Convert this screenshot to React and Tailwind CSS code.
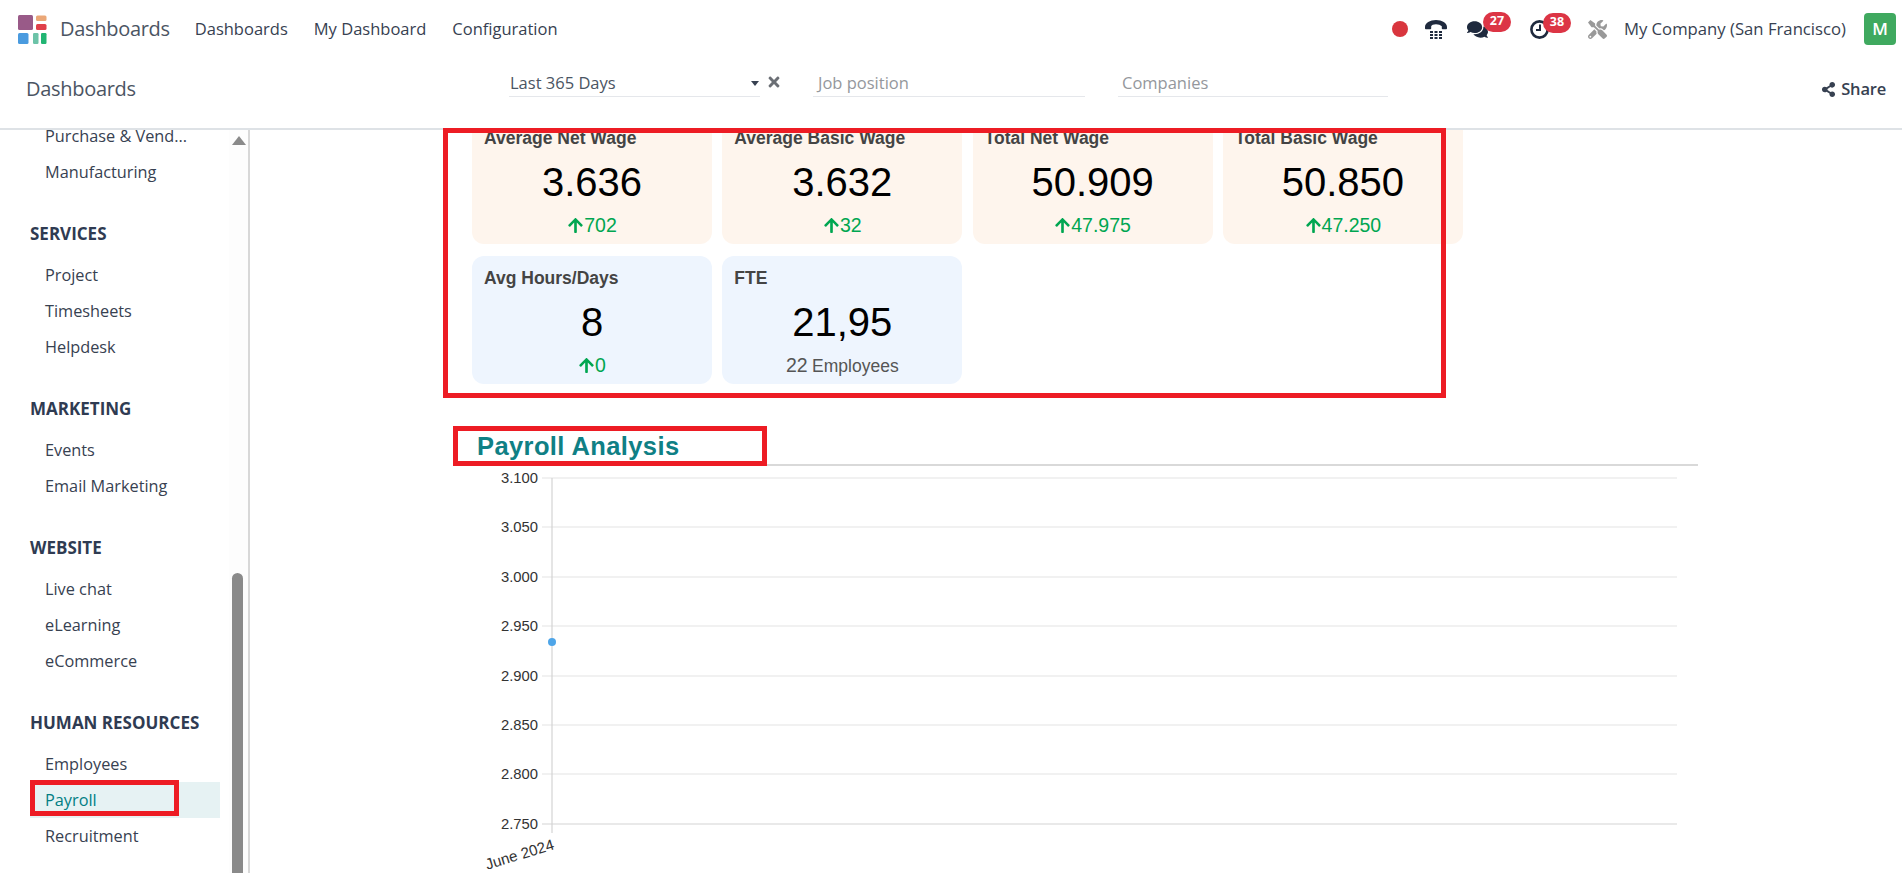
import React from "react";
import { FaArrowUp, FaComments, FaShareAlt, FaTimes, FaTools } from "react-icons/fa";

const sections = [
  { title: null, items: ["Purchase & Vend...", "Manufacturing"] },
  { title: "SERVICES", items: ["Project", "Timesheets", "Helpdesk"] },
  { title: "MARKETING", items: ["Events", "Email Marketing"] },
  { title: "WEBSITE", items: ["Live chat", "eLearning", "eCommerce"] },
  { title: "HUMAN RESOURCES", items: ["Employees", "Payroll", "Recruitment"] },
];

const cards = [
  { title: "Average Net Wage", value: "3.636", delta: "702", bg: "bg-[#fef5ed]" },
  { title: "Average Basic Wage", value: "3.632", delta: "32", bg: "bg-[#fef5ed]" },
  { title: "Total Net Wage", value: "50.909", delta: "47.975", bg: "bg-[#fef5ed]" },
  { title: "Total Basic Wage", value: "50.850", delta: "47.250", bg: "bg-[#fef5ed]" },
  { title: "Avg Hours/Days", value: "8", delta: "0", bg: "bg-[#eef5fe]" },
  { title: "FTE", value: "21,95", employees: "22", bg: "bg-[#eef5fe]" },
];

const ticks = [
  ["3.100", 12],
  ["3.050", 61],
  ["3.000", 111],
  ["2.950", 160],
  ["2.900", 210],
  ["2.850", 259],
  ["2.800", 308],
  ["2.750", 358],
];

function Logo() {
  return (
    <svg width="29" height="29" viewBox="0 0 29 29" className="shrink-0">
      <rect x="0" y="0" width="15" height="15" rx="1.5" fill="#995a88" />
      <rect x="18" y="0.5" width="10.5" height="5.5" rx="1.5" fill="#eba777" />
      <rect x="18" y="9" width="10.5" height="6" rx="1.5" fill="#e0404a" />
      <rect x="0" y="18" width="10.5" height="11" rx="1.5" fill="#4a9bdf" />
      <rect x="15" y="18" width="5.5" height="11" rx="1.2" fill="#6cc3a8" />
      <rect x="23" y="18" width="5.5" height="11" rx="1.2" fill="#22b573" />
    </svg>
  );
}

function PhoneIcon() {
  return (
    <svg width="22" height="19" viewBox="0 0 22 19" fill="#1f2a3e">
      <path d="M0 7C0 3 5 0 11 0s11 3 11 7v1.5c0 .5-.4.8-.8.8h-3.600c-.5 0-.8-.4-.8-.8V6.300C15.500 5 13.500 4.300 11 4.300S6.500 5 6.200 6.300v2.200c0 .5-.4.8-.8.8H.8C.4 9.300 0 9 0 8.500z" />
      {[11, 14, 17].map((y) =>
        [5, 9.5, 14].map((x) => <rect key={`${x}-${y}`} x={x} y={y} width="3" height="2" />)
      )}
    </svg>
  );
}

function ClockIcon() {
  return (
    <svg width="19" height="19" viewBox="0 0 19 19" fill="none" stroke="#1f2a3e" strokeWidth="2.600">
      <circle cx="9.500" cy="9.500" r="8.100" />
      <path d="M10 4.500v5.500H6" strokeWidth="2" />
    </svg>
  );
}

function Badge({ className, children }) {
  return (
    <span className={`absolute top-[-7px] flex h-[20px] w-[28px] items-center justify-center rounded-full bg-[#dc3545] text-[12.500px] font-bold text-white ${className}`}>
      {children}
    </span>
  );
}

function TopBar() {
  return (
    <div className="flex h-[58px] items-center pl-[18px] text-[#374151]">
      <Logo />
      <span className="ml-[13px] text-[20px] tracking-[-0.3px] text-[#4b5563]">Dashboards</span>
      <nav className="ml-[25px] flex gap-[26px] text-[16.500px]">
        <span>Dashboards</span>
        <span>My Dashboard</span>
        <span>Configuration</span>
      </nav>
      <div className="ml-auto flex items-center pr-[6px]">
        <span className="h-[16px] w-[16px] rounded-full bg-[#d9363e]" />
        <span className="ml-[17px] flex"><PhoneIcon /></span>
        <span className="relative ml-[20px] flex">
          <FaComments className="text-[21px] text-[#1f2a3e]" />
          <Badge className="left-[16px]">27</Badge>
        </span>
        <span className="relative ml-[42px] flex">
          <ClockIcon />
          <Badge className="left-[13px]">38</Badge>
        </span>
        <FaTools className="ml-[39px] text-[19px] text-[#999]" />
        <span className="ml-[17px] text-[16.700px]">My Company (San Francisco)</span>
        <span className="ml-[18px] flex h-[32px] w-[32px] items-center justify-center rounded-[4px] bg-[#3fa95f] text-[17px] font-semibold text-white">
          M
        </span>
      </div>
    </div>
  );
}

function FilterBar() {
  return (
    <div className="flex h-[72px] items-start border-b-2 border-[#dee2e6] pl-[26px] text-[#374151]">
      <span className="mt-[16px] w-[483px] text-[20px] tracking-[-0.3px] text-[#4b5563]">Dashboards</span>
      <div className="mt-[12px] flex h-[27px] w-[251px] items-center justify-between border-b border-[#e5e7eb] pl-[1px] text-[16.500px] text-[#4b5563]">
        <span>Last 365 Days</span>
        <span className="mr-[1px] h-0 w-0 border-x-[4.500px] border-t-[5px] border-x-transparent border-t-[#374151]" />
      </div>
      <FaTimes className="mt-[16px] ml-[6px] text-[16px] text-[#6b6f75]" />
      <div className="mt-[12px] ml-[31px] flex h-[27px] w-[272px] items-center border-b border-[#e5e7eb] pl-[5px] text-[16.500px] text-[#94979c]">
        Job position
      </div>
      <div className="mt-[12px] ml-[33px] flex h-[27px] w-[270px] items-center border-b border-[#e5e7eb] pl-[4px] text-[16.500px] text-[#94979c]">
        Companies
      </div>
      <div className="mt-[19px] ml-auto flex items-center gap-[5px] pr-[16px] text-[16.500px] font-semibold tracking-[-0.2px]">
        <FaShareAlt className="text-[15px]" />
        Share
      </div>
    </div>
  );
}

function Sidebar() {
  return (
    <aside className="relative w-[250px] shrink-0 overflow-hidden border-r-2 border-[#d8d8d8] bg-white pl-[30px]">
      <div className="mt-[-12px] w-[190px]">
        {sections.map((section, i) => (
          <div key={i} className="pb-[30px]">
            {section.title && (
              <div className="mb-[9px] flex h-[28px] items-center text-[17px] font-bold whitespace-nowrap text-[#2f3b52]">
                {section.title}
              </div>
            )}
            {section.items.map((item) => (
              <div
                key={item}
                className={`flex h-[36px] items-center pl-[15px] text-[16.300px] leading-[18px] ${
                  item === "Payroll" ? "bg-[#e6f2f3] text-[#017e84]" : "text-[#374151]"
                }`}
              >
                {item}
              </div>
            ))}
          </div>
        ))}
      </div>
      <div className="absolute top-0 right-0 bottom-0 w-[19px] bg-[#fdfdfd]">
        <svg width="14" height="9" viewBox="0 0 14 9" className="absolute top-[6px] left-[3px]" fill="#8a8a8a">
          <path d="M7 0l7 9H0z" />
        </svg>
        <div className="absolute top-[443px] bottom-[-20px] left-[3px] w-[11px] rounded-full bg-[#8a8a8a]" />
      </div>
    </aside>
  );
}

function Card({ card }) {
  return (
    <div className={`h-[128px] rounded-[12px] pt-[12px] ${card.bg} text-center [font-family:'Liberation_Sans',Arial,sans-serif]`}>
      <div className="pl-[12px] text-left text-[17.500px] leading-[20px] font-bold text-[#444]">{card.title}</div>
      <div className="mt-[12px] text-[40px] leading-[44px] text-black">{card.value}</div>
      {card.employees ? (
        <div className="mt-[9px] leading-[24px] text-[#555]">
          <span className="text-[19.500px]">{card.employees}</span> <span className="text-[17.500px]">Employees</span>
        </div>
      ) : (
        <div className="mt-[9px] flex items-center justify-center text-[19.500px] leading-[24px] text-[#00a651]">
          <FaArrowUp className="text-[17px]" />
          {card.delta}
        </div>
      )}
    </div>
  );
}

function Chart() {
  return (
    <svg width="1243" height="407" viewBox="0 0 1243 407" className="block">
      {ticks.map(([label, y]) => (
        <g key={label}>
          <line x1="87" x2="1222" y1={y} y2={y} stroke={label === "2.750" ? "#d4d4d4" : "#e3e3e3"} strokeWidth="1.200" />
          <text x="83" y={y + 5} textAnchor="end" fontSize="14.800" fill="#333" fontFamily="'Liberation Sans', Arial, sans-serif">
            {label}
          </text>
        </g>
      ))}
      <line x1="97" x2="97" y1="12" y2="367" stroke="#d4d4d4" strokeWidth="1.200" />
      <circle cx="97" cy="176" r="4" fill="#4ea5e8" />
      <text
        x="100"
        y="383"
        textAnchor="end"
        fontSize="15.200"
        fill="#333"
        fontFamily="'Liberation Sans', Arial, sans-serif"
        transform="rotate(-17 100 383)"
      >
        June 2024
      </text>
    </svg>
  );
}

export default function App() {
  return (
    <div className="relative flex h-[873px] w-[1902px] flex-col overflow-hidden bg-white font-['Open_Sans',sans-serif]">
      <TopBar />
      <FilterBar />
      <div className="flex min-h-0 flex-1">
        <Sidebar />
        <main className="min-w-0 flex-1 overflow-hidden pl-[205px]">
          <div className="mt-[-14px] ml-[17px] grid grid-cols-[repeat(4,240px)] gap-x-[10.300px] gap-y-[12px]">
            {cards.map((card) => (
              <Card key={card.title} card={card} />
            ))}
          </div>
          <div className="mt-[41px] flex h-[41px] w-[1243px] items-center border-b-2 border-[#d9d9d9] pt-[3px] pl-[22px] text-[25.500px] font-bold tracking-[0.4px] text-[#0f8085] [font-family:'Liberation_Sans',Arial,sans-serif]">
            Payroll Analysis
          </div>
          <Chart />
        </main>
      </div>

      {/* red annotation boxes */}
      <div className="pointer-events-none absolute top-[128px] left-[443px] h-[270px] w-[1003px] border-[5px] border-[#ed1c24]" />
      <div className="pointer-events-none absolute top-[426px] left-[453px] h-[40px] w-[314px] border-[5px] border-[#ed1c24]" />
      <div className="pointer-events-none absolute top-[780px] left-[30px] h-[36px] w-[149px] border-[5px] border-[#ed1c24]" />
    </div>
  );
}
